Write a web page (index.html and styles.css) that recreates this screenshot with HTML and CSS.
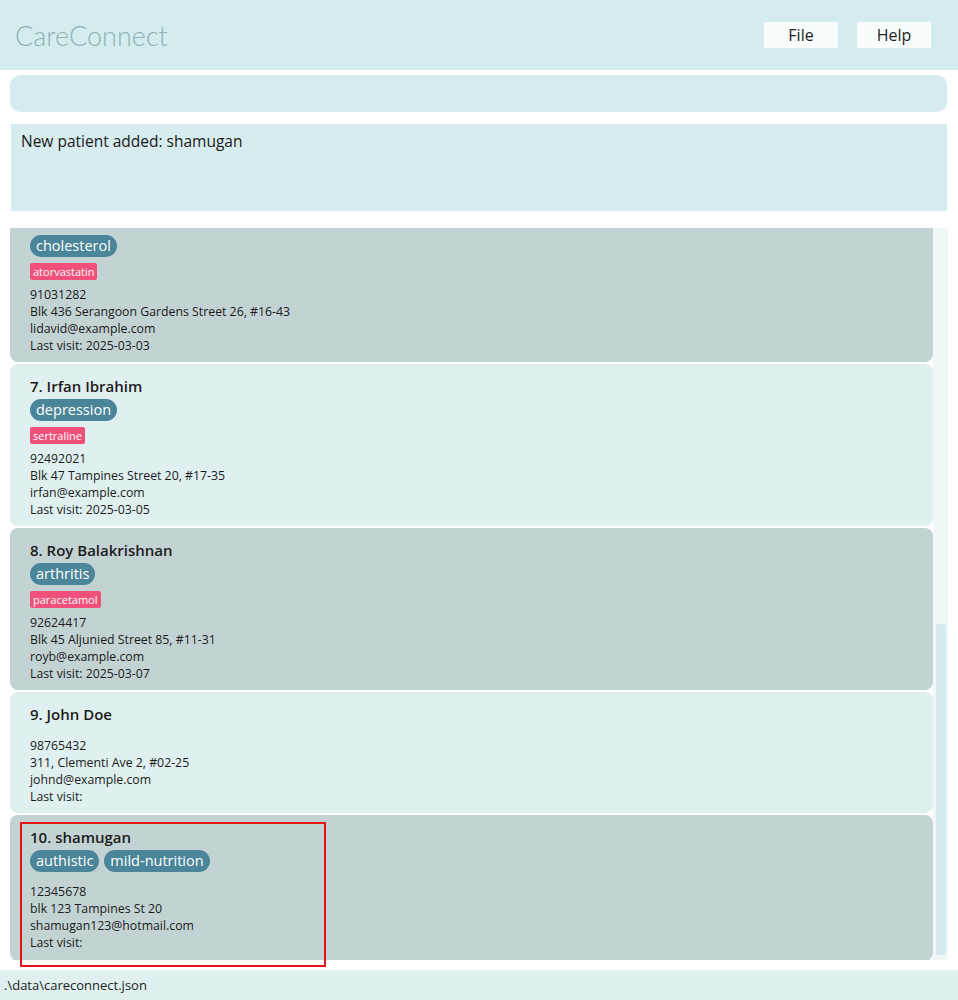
FILE: index.html
```html
<!DOCTYPE html>
<html>
<head>
<meta charset="utf-8">
<title>CareConnect</title>
<link rel="stylesheet" href="styles.css">
</head>
<body>
<header class="topbar">
  <div class="brand">CareConnect</div>
  <nav class="menu">
    <button class="menu-btn">File</button>
    <button class="menu-btn">Help</button>
  </nav>
</header>
<main class="main">
  <div class="command-box"></div>
  <div class="result-box">New patient added: shamugan</div>
  <section class="list-area">
    <div class="list-viewport">
      <div class="list">
        <article class="card dark">
          <div class="name">6. David Li</div>
          <div class="tags"><span class="tag">cholesterol</span></div>
          <div class="meds"><span class="med">atorvastatin</span></div>
          <div class="details">
            <div>91031282</div>
            <div>Blk 436 Serangoon Gardens Street 26, #16-43</div>
            <div>lidavid@example.com</div>
            <div>Last visit: 2025-03-03</div>
          </div>
        </article>
        <article class="card light">
          <div class="name">7. Irfan Ibrahim</div>
          <div class="tags"><span class="tag">depression</span></div>
          <div class="meds"><span class="med">sertraline</span></div>
          <div class="details">
            <div>92492021</div>
            <div>Blk 47 Tampines Street 20, #17-35</div>
            <div>irfan@example.com</div>
            <div>Last visit: 2025-03-05</div>
          </div>
        </article>
        <article class="card dark">
          <div class="name">8. Roy Balakrishnan</div>
          <div class="tags"><span class="tag">arthritis</span></div>
          <div class="meds"><span class="med">paracetamol</span></div>
          <div class="details">
            <div>92624417</div>
            <div>Blk 45 Aljunied Street 85, #11-31</div>
            <div>royb@example.com</div>
            <div>Last visit: 2025-03-07</div>
          </div>
        </article>
        <article class="card light">
          <div class="name">9. John Doe</div>
          <div class="details details-bare">
            <div>98765432</div>
            <div>311, Clementi Ave 2, #02-25</div>
            <div>johnd@example.com</div>
            <div>Last visit:</div>
          </div>
        </article>
        <article class="card dark card-last">
          <div class="name">10. shamugan</div>
          <div class="tags"><span class="tag">authistic</span><span class="tag">mild-nutrition</span></div>
          <div class="details details-nomed">
            <div>12345678</div>
            <div>blk 123 Tampines St 20</div>
            <div>shamugan123@hotmail.com</div>
            <div>Last visit:</div>
          </div>
        </article>
      </div>
    </div>
    <div class="scroll-track"><div class="scroll-thumb"></div></div>
    <div class="highlight"></div>
  </section>
</main>
<footer class="status">.\data\careconnect.json</footer>
</body>
</html>
```
FILE: styles.css
```css
html, body {
  margin: 0;
  padding: 0;
  background: #ffffff;
}
body {
  width: 958px;
  height: 1000px;
  overflow: hidden;
  font-family: "Open Sans", "Noto Sans", sans-serif;
  color: #1a1a1a;
}
.topbar {
  height: 70px;
  background: #d4ecee;
  display: flex;
  align-items: center;
  justify-content: space-between;
  padding: 0 27px 0 15px;
  box-sizing: border-box;
}
.brand {
  font-family: "Lato", "Open Sans", sans-serif;
  font-weight: 300;
  font-size: 27px;
  color: #8db3b6;
}
.menu {
  display: flex;
  gap: 19px;
}
.menu-btn {
  width: 74px;
  height: 26px;
  border: none;
  background: #f9fcfc;
  font-family: "Open Sans", sans-serif;
  font-size: 16px;
  color: #222;
  padding: 0;
}
.main {
  padding: 5px 10px 0 10px;
}
.command-box {
  height: 37px;
  background: #d7ecee;
  border-radius: 10px;
  margin-right: 1px;
}
.result-box {
  height: 87px;
  margin-top: 12px;
  margin-left: 1px;
  margin-right: 1px;
  background: #d7ecee;
  box-sizing: border-box;
  padding: 6px 10px;
  font-size: 15.5px;
  color: #1a1a1a;
}
.list-area {
  position: relative;
  margin-top: 17px;
  height: 732px;
  display: flex;
}
.list-viewport {
  flex: 1;
  overflow: hidden;
}
.list {
  margin-top: -28px;
  display: flex;
  flex-direction: column;
  gap: 2px;
}
.card {
  border-radius: 8px;
  padding: 12px 20px 8px 20px;
}
.card.dark { background: #c3d3d3; }
.card.light { background: #e0f0f0; }
.card-last { padding-bottom: 10px; }
.name {
  font-size: 15px;
  font-weight: 600;
  line-height: 20px;
  color: #1c1c1c;
}
.tags {
  margin-top: 3px;
  display: flex;
  gap: 5px;
}
.tag {
  background: #4a8599;
  color: #ffffff;
  font-size: 14.5px;
  line-height: 22px;
  height: 22px;
  padding: 0 6px;
  border-radius: 11px;
}
.meds {
  margin-top: 6px;
  display: flex;
}
.med {
  background: #f0507a;
  color: #ffffff;
  font-size: 11px;
  line-height: 17px;
  height: 17px;
  padding: 0 3px;
  border-radius: 2px;
}
.details {
  margin-top: 6px;
  font-size: 12.3px;
  line-height: 17px;
  color: #1a1a1a;
}
.details-bare { margin-top: 13px; }
.details-nomed { margin-top: 11px; }
.scroll-track {
  width: 15px;
  background: #eff7f7;
  position: relative;
}
.scroll-thumb {
  position: absolute;
  left: 3px;
  width: 10px;
  top: 396px;
  height: 331px;
  background: #d5eaec;
  border-radius: 3px;
}
.highlight {
  position: absolute;
  left: 10px;
  top: 594px;
  width: 302px;
  height: 141px;
  border: 2px solid #e8141c;
}
.status {
  position: absolute;
  left: 0;
  top: 970px;
  width: 958px;
  height: 30px;
  background: #e0f0f0;
  font-size: 13px;
  line-height: 30px;
  padding-left: 4px;
  box-sizing: border-box;
  color: #222;
}
```
